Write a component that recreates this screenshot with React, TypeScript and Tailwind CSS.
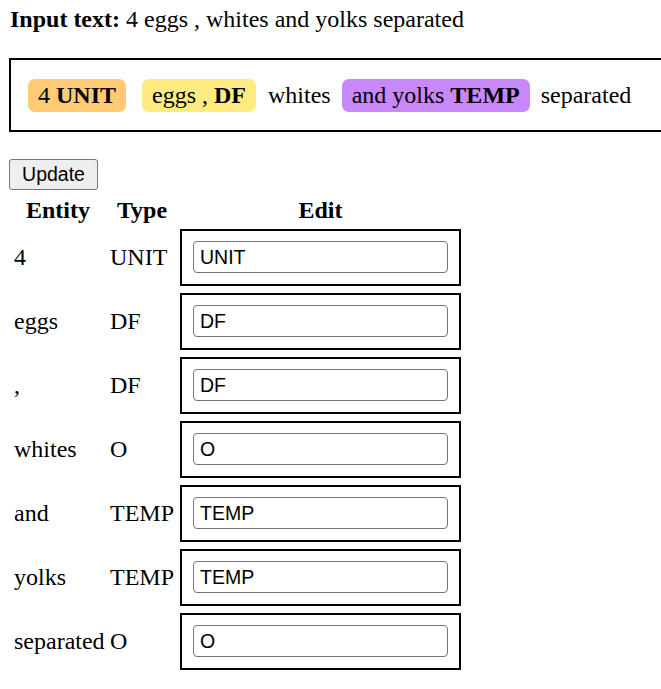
import React from "react";

type Row = {
    entity: string;
    type: string;
}

const rows: Row[] = [
    { entity: "4", type: "UNIT" },
    { entity: "eggs", type: "DF" },
    { entity: ",", type: "DF" },
    { entity: "whites", type: "O" },
    { entity: "and", type: "TEMP" },
    { entity: "yolks", type: "TEMP" },
    { entity: "separated", type: "O" },
]

const serif = "font-['Liberation_Serif',_'Times_New_Roman',_serif]"
const sans = "font-['Liberation_Sans',_Arial,_sans-serif]"

function Mark({ text, label, color }: { text: string; label: string; color: string }) {
    return (
        <span className={`flex items-center h-[33px] px-[10px] rounded-[7px] leading-none whitespace-pre ${color}`}>
            {text} <b>{label}</b>
        </span>
    )
}

export default function App() {
    return (
        <div className={`w-[661px] h-[689px] overflow-hidden bg-white text-black text-[24px] ${serif}`}>
            <p className="pl-[10px] pt-[5px] leading-[28px]">
                <b>Input text:</b> 4 eggs , whites and yolks separated
            </p>

            <div className="ml-[9px] mt-[25px] w-[700px] h-[74px] border-2 border-black flex items-center pl-[17px] leading-none">
                <Mark text="4" label="UNIT" color="bg-[#feca74]" />
                <span className="ml-[16px]" />
                <Mark text="eggs ," label="DF" color="bg-[#ffeb80]" />
                <span className="ml-[12px]">whites</span>
                <span className="ml-[11px]" />
                <Mark text="and yolks" label="TEMP" color="bg-[#c887fb]" />
                <span className="ml-[11px]">separated</span>
            </div>

            <button className={`ml-[9px] mt-[27px] w-[89px] h-[31px] bg-[#efefef] border border-[#767676] rounded-[3px] text-[19.5px] leading-none ${sans}`}>
                Update
            </button>

            {/* table */}
            <div className="ml-[12px] mt-[5px] flex flex-col gap-[5px]">
                <div className="grid grid-cols-[92px_68px_281px] gap-x-[4px] font-bold leading-[28px]">
                    <div className="text-center">Entity</div>
                    <div className="text-center">Type</div>
                    <div className="text-center">Edit</div>
                </div>
                <div className="flex flex-col gap-[7px]">
                    {rows.map((row, i) => (
                        <div key={i} className="grid grid-cols-[92px_68px_281px] gap-x-[4px] items-center h-[57px]">
                            <div className="pl-[2px]">{row.entity}</div>
                            <div className="pl-[2px]">{row.type}</div>
                            <div className="h-[57px] border-2 border-black flex items-center px-[11px]">
                                <input
                                    defaultValue={row.type}
                                    className={`w-full h-[32px] border border-[#767676] rounded-[4px] px-[6px] text-[19.5px] ${sans} outline-none`}
                                />
                            </div>
                        </div>
                    ))}
                </div>
            </div>
        </div>
    )
}
